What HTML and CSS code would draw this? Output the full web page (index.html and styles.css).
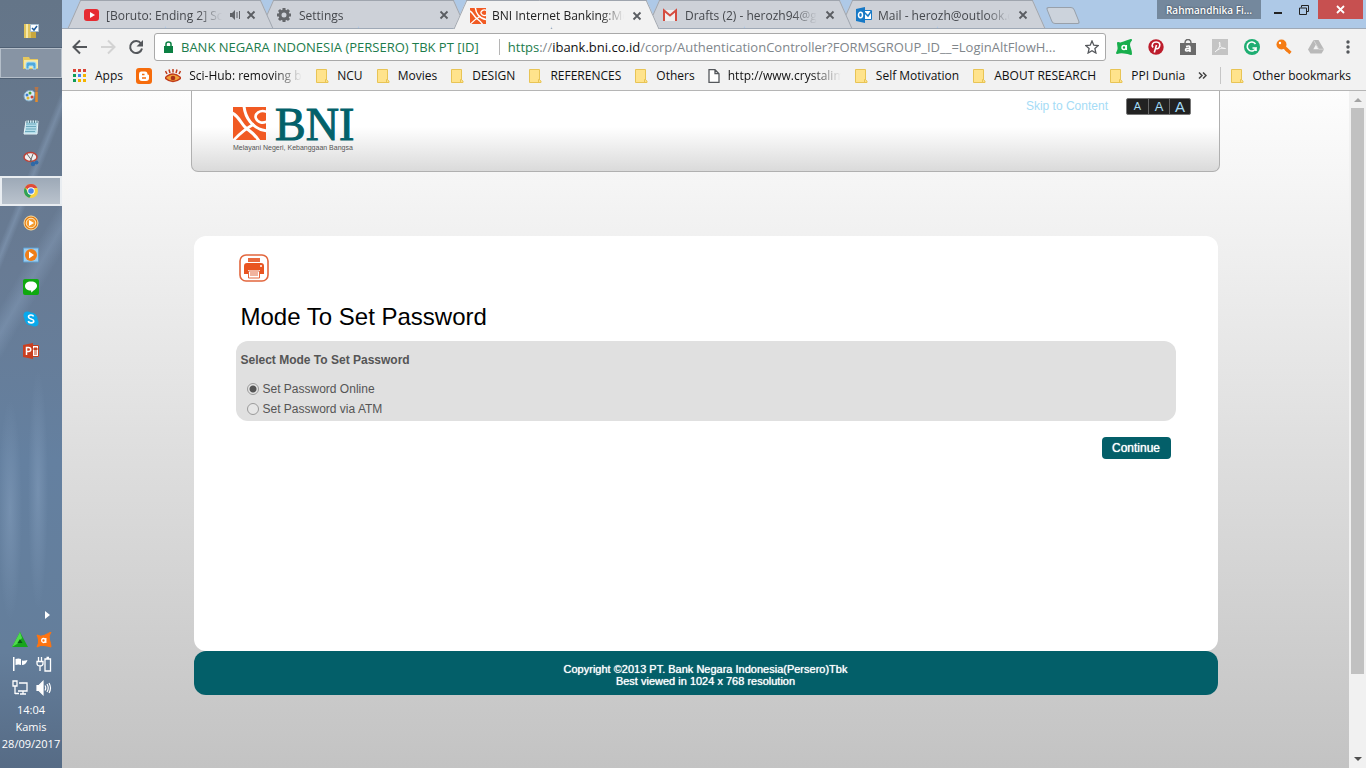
FILE: index.html
```html
<!DOCTYPE html>
<html lang="en">
<head>
    <meta charset="UTF-8">
    <meta name="viewport" content="width=device-width, initial-scale=1.0">
    <title>BNI Internet Banking:Mode To Set Password</title>
    <link rel="stylesheet" href="styles.css">
</head>
<body>

<svg class="defs" width="0" height="0" aria-hidden="true">
    <symbol id="folder" viewBox="0 0 14 16">
        <path d="M1.5 1.5h10v10.500l1.500 1v1.500h-11.500z" fill="#ffe38c" stroke="#e8c455"/>
        <path d="M10.500 14v-2.500h1.500" fill="none" stroke="#e8c455"/>
    </symbol>
    <symbol id="close" viewBox="0 0 10 10">
        <path d="M1.500 1.500l7 7M8.500 1.500l-7 7" stroke="#5a5d62" stroke-width="1.800"/>
    </symbol>
    <symbol id="bni" viewBox="0 0 33 33">
        <path d="M0 0h33v33H0z" fill="#f15a23"/>
        <g fill="none" stroke="#fff">
            <path d="M-1 6C6 9 8 17 13 21s9 6 13 13" stroke-width="3"/>
            <path d="M11-1C12 10 19 22 34 24" stroke-width="3"/>
            <path d="M34 5C27 2 21 7 23 11.500s7 5 11 3" stroke-width="2.600"/>
            <path d="M21 17C14 21 7 26 0 34" stroke-width="2.600"/>
        </g>
    </symbol>
</svg>

<div class="desktop">
    <nav class="taskbar" aria-label="Taskbar">
        <div class="apps">
            <button class="app" aria-label="Tasks"><svg width="16" height="16" viewBox="0 0 16 16"><path d="M1 1h7v14H1z" fill="#e2c55c"/><path d="M3 1h2v14H3z" fill="#f7e9a8"/><path d="M8 7h5v8H8z" fill="#c9a73f"/><path d="M7.500 1.500h8v7h-8z" fill="#fff" stroke="#a8bfd2"/><path d="M9 5l2 2 3-4" fill="none" stroke="#1e5b9b" stroke-width="1.500"/></svg></button>
            <button class="app open" aria-label="File Explorer"><svg width="16" height="16" viewBox="0 0 16 16"><path d="M0 2h6l1 2h8v10H0z" fill="#e5c75d"/><path d="M1 5h14v8H1z" fill="#f8e9a4"/><path d="M3 14V9q0-2 2-2h6q2 0 2 2v5h-3v-3H6v3z" fill="#4fa9dd" stroke="#aee0f7"/></svg></button>
            <button class="app" aria-label="Paint"><svg width="16" height="16" viewBox="0 0 16 16"><path d="M1 9c0-4 5-7 9-5 3 2 1 4 1 6s-2 4-5 4-5-2-5-5z" fill="#d9eaf4" stroke="#7aa6c3"/><circle cx="4" cy="8" r="1.500" fill="#3a7ed0"/><circle cx="7" cy="6" r="1.500" fill="#53a33d"/><circle cx="5" cy="11" r="1.500" fill="#e0b832"/><circle cx="9" cy="10" r="1.500" fill="#c9443a"/><path d="M13.500 5v10" stroke="#e48b2b" stroke-width="2.500"/><path d="M11.500 0h4l-1 5h-2z" fill="#b3754b"/></svg></button>
            <button class="app" aria-label="Notepad"><svg width="16" height="16" viewBox="0 0 16 16"><path d="M3 2h12l-1 13H1z" fill="#b4dce9" stroke="#e9f5f8"/><path d="M3 5h10M3 7.500h10M3 10h10M2 12.500h10" stroke="#6ba9bd"/><path d="M4 1v3M6.500 1v3M9 1v3M11.500 1v3M14 1v3" stroke="#567b8b"/></svg></button>
            <button class="app" aria-label="Snipping Tool"><svg width="16" height="16" viewBox="0 0 16 16"><ellipse cx="7.500" cy="6" rx="6.500" ry="4.500" fill="#f0eeee" stroke="#bd4237" stroke-width="1.500"/><path d="M4 3l6 8M10 3l-3 8" stroke="#666"/><circle cx="10" cy="13" r="2.200" fill="#2e69a7"/><circle cx="13.500" cy="11.500" r="2" fill="#2e69a7"/></svg></button>
            <button class="app open bright" aria-label="Google Chrome"><svg width="16" height="16" viewBox="0 0 16 16"><circle cx="8" cy="8" r="7" fill="#f8d13d"/><path d="M8 8L2 4.400A7 7 0 0 1 14.300 5H8z" fill="#df4b3b"/><path d="M2 4.400L6 11l2 .8-1.500 3A7 7 0 0 1 2 4.400z" fill="#2da058"/><circle cx="8" cy="8" r="3.700" fill="#fff"/><circle cx="8" cy="8" r="2.800" fill="#4b86e8"/></svg></button>
            <button class="app" aria-label="Media Player"><svg width="16" height="16" viewBox="0 0 16 16"><circle cx="8" cy="8" r="7" fill="#e27b12" stroke="#ffe0a0"/><circle cx="8" cy="8" r="4.800" fill="#f59a2b" stroke="#fff1cf"/><path d="M6 5l5 3-5 3z" fill="#fff"/></svg></button>
            <button class="app" aria-label="Movie Player"><svg width="16" height="16" viewBox="0 0 16 16"><path d="M.5 1h15v14H.5z" fill="#9ccdf0" stroke="#5e9dcc"/><circle cx="8" cy="8" r="6" fill="#ef7e17"/><path d="M6 4.500l5 3.500-5 3.500z" fill="#fff"/></svg></button>
            <button class="app" aria-label="Line"><svg width="16" height="16" viewBox="0 0 16 16"><rect width="16" height="16" rx="2" fill="#0fa90f"/><path d="M8 2.500c4 0 6 2 6 4.500S11 11 9 13c-.5 1-1 .5-.8-1.500C4 11.500 2 9.500 2 7s2-4.500 6-4.500z" fill="#fff"/></svg></button>
            <button class="app" aria-label="Skype"><svg width="16" height="16" viewBox="0 0 16 16"><circle cx="8" cy="8" r="6.500" fill="#08a9ec"/><circle cx="4.500" cy="4.500" r="4" fill="#08a9ec"/><circle cx="11.500" cy="11.500" r="4" fill="#08a9ec"/><path d="M10.500 5.500C10 3.500 5.500 3.500 5.500 6s5.300 1.500 5.300 4-5 2.500-5.500 0" fill="none" stroke="#fff" stroke-width="1.600"/></svg></button>
            <button class="app" aria-label="PowerPoint"><svg width="16" height="16" viewBox="0 0 16 16"><path d="M9 2.500h6.500v11H9z" fill="#fff" stroke="#c43e1d"/><path d="M11 5h3v2h-3zM11 9h3M11 11h3" fill="#c43e1d" stroke="#c43e1d"/><path d="M0 2l10-2v16L0 14z" fill="#c93f20"/><path d="M3.500 12V4.500h2c3 0 3 4 0 4h-2" fill="none" stroke="#fff" stroke-width="1.500"/></svg></button>
        </div>
        <div class="tray">
            <button class="tray-more" aria-label="Show hidden icons"><svg width="5" height="8" viewBox="0 0 5 8"><path d="M0 0l5 4-5 4z" fill="#fff"/></svg></button>
            <div class="tray-icons">
                <svg width="16" height="16" viewBox="0 0 16 16"><path d="M8 0l8 15H0z" fill="#16a51c"/><path d="M8 0l2 6-5 6-5 3z" fill="#4fdc4c"/><path d="M8 7l2.500 4h-5z" fill="#075c12"/></svg>
                <svg width="16" height="16" viewBox="0 0 16 16"><path d="M15 0Q12 4 13.500 8T15 15Q12 14 8 13.500T1 15Q3 11 2.500 8T1 3Q5 5 8 3.500T15 0z" fill="#ff7410" stroke="#ff7410" stroke-linejoin="round"/><ellipse cx="7.500" cy="8.500" rx="1.800" ry="2" fill="none" stroke="#fff" stroke-width="1.300"/><path d="M9.800 6v5" stroke="#fff" stroke-width="1.300"/></svg>
                <svg width="16" height="16" viewBox="0 0 16 16" fill="#fff"><path d="M1 1h1.500v14H1zM3.500 3q3-1 5.500 0v6q-2.500-1-5.500 0zM10 4.500q2 .5 5.500-.5-1.500 5-5.500 5z"/></svg>
                <svg width="16" height="16" viewBox="0 0 16 16" fill="none" stroke="#fff" stroke-width="1.300"><path d="M2.500 1v4M5.500 1v4M1 5.500h6v2Q7 10 4 10T1 7.500zM4 10v5"/><path d="M9 3h5.500v12H9zM10.500 1.500H13"/></svg>
                <svg width="16" height="16" viewBox="0 0 16 16" fill="none" stroke="#fff" stroke-width="1.300"><path d="M7 3h8v8H6M8 14h6M11 11v3M1 1h4v5H1zM3 6v8M3 13.500h4"/></svg>
                <svg width="16" height="16" viewBox="0 0 16 16" fill="none" stroke="#fff" stroke-width="1.200"><path d="M1 5.500h2l4-4v13l-4-4H1z" fill="#fff"/><path d="M9 5.500q1.500 2.500 0 5M11 4q2.500 4 0 8M13 3q3 5 0 10"/></svg>
            </div>
            <div class="clock">
                <div>14:04</div>
                <div>Kamis</div>
                <div>28/09/2017</div>
            </div>
        </div>
    </nav>

    <div class="browser">
        <header class="tabs">
            <div class="tab">
                <svg class="favicon" width="16" height="16" viewBox="0 0 16 16"><rect x="0" y="2" width="15" height="12" rx="3" fill="#e62b31"/><path d="M6 5l5 3-5 3z" fill="#fff"/></svg>
                <span class="tab-title">[Boruto: Ending 2] Scenario</span>
                <svg class="sound" width="11" height="10" viewBox="0 0 11 10"><path d="M0 3h2l3-3v10L2 7H0z" fill="#606368"/><path d="M7 2v6M9.500 1v8" stroke="#606368"/></svg>
                <button class="tab-close" aria-label="Close"><svg width="10" height="10"><use href="#close"/></svg></button>
            </div>
            <div class="tab">
                <svg class="favicon" width="16" height="16" viewBox="0 0 16 16"><circle cx="7" cy="8" r="4" fill="none" stroke="#64676b" stroke-width="3"/><path d="M7 1v3M7 12v3M0 8h3M11 8h3M2 3l2 2M10 11l2 2M12 3l-2 2M2 13l2-2" stroke="#64676b" stroke-width="3"/></svg>
                <span class="tab-title">Settings</span>
                <button class="tab-close" aria-label="Close"><svg width="10" height="10"><use href="#close"/></svg></button>
            </div>
            <div class="tab active">
                <svg class="favicon" width="16" height="16"><use href="#bni"/></svg>
                <span class="tab-title">BNI Internet Banking:Mode To</span>
                <button class="tab-close" aria-label="Close"><svg width="10" height="10"><use href="#close"/></svg></button>
            </div>
            <div class="tab">
                <svg class="favicon" width="16" height="16" viewBox="0 0 16 16"><path d="M1 3h12v11H1z" fill="#eee"/><path d="M1 14V3.500l6 5 6-5V14" fill="none" stroke="#d54c3f" stroke-width="2"/></svg>
                <span class="tab-title">Drafts (2) - herozh94@gmail</span>
                <button class="tab-close" aria-label="Close"><svg width="10" height="10"><use href="#close"/></svg></button>
            </div>
            <div class="tab">
                <svg class="favicon" width="16" height="16" viewBox="0 0 16 16"><path d="M8 3.500h7.500v9H8z" fill="#fff" stroke="#1779c6"/><path d="M8 5l4 4 3.500-5" fill="none" stroke="#1779c6" stroke-width="1.500"/><path d="M0 2l9-2v16l-9-2z" fill="#1779c6"/><ellipse cx="4.500" cy="8" rx="2" ry="2.700" fill="none" stroke="#fff" stroke-width="1.500"/></svg>
                <span class="tab-title">Mail - herozh@outlook.com</span>
                <button class="tab-close" aria-label="Close"><svg width="10" height="10"><use href="#close"/></svg></button>
            </div>
            <button class="new-tab" aria-label="New tab"></button>
            <div class="window-controls">
                <button class="profile">Rahmandhika Fi...</button>
                <button class="win" aria-label="Minimize"><svg width="8" height="10" viewBox="0 0 8 10"><path d="M0 8h8" stroke="#222" stroke-width="2"/></svg></button>
                <button class="win" aria-label="Restore"><svg width="10" height="10" viewBox="0 0 10 10"><path d="M.5 3h7v6.500h-7zM2.500 2.500v-2h7v6h-2" fill="none" stroke="#222"/></svg></button>
                <button class="win quit" aria-label="Close window"><svg width="9" height="9" viewBox="0 0 9 9"><path d="M1 1l7 7M8 1L1 8" stroke="#fff" stroke-width="1.800"/></svg></button>
            </div>
        </header>

        <div class="toolbar">
            <button class="nav-btn" aria-label="Back"><svg width="16" height="16" viewBox="0 0 16 16"><path d="M15 8H2M8 1.500L1.500 8 8 14.500" fill="none" stroke="#54575b" stroke-width="2"/></svg></button>
            <button class="nav-btn" aria-label="Forward"><svg width="16" height="16" viewBox="0 0 16 16"><path d="M1 8h13M8 1.500L14.500 8 8 14.500" fill="none" stroke="#d3d3d3" stroke-width="2"/></svg></button>
            <button class="nav-btn" aria-label="Reload"><svg width="16" height="16" viewBox="0 0 16 16"><path d="M13 4.500A6 6 0 1 0 14 9.500" fill="none" stroke="#54575b" stroke-width="2"/><path d="M15 1v6.500H8.500z" fill="#54575b"/></svg></button>
            <div class="omnibox">
                <button class="secure"><svg width="9" height="12" viewBox="0 0 9 12"><path d="M0 5h9v7H0z" fill="#0b8043"/><path d="M2 5V3q0-2 2.500-2T7 3v2" fill="none" stroke="#0b8043" stroke-width="1.500"/></svg>BANK NEGARA INDONESIA (PERSERO) TBK PT [ID]</button>
                <div class="url" role="textbox" aria-label="Address" contenteditable="true" spellcheck="false"><span class="scheme">https</span>://<span class="host">ibank.bni.co.id</span>/corp/AuthenticationController?FORMSGROUP_ID__=LoginAltFlowH...</div>
                <button class="star" aria-label="Bookmark this page"><svg width="14" height="14" viewBox="0 0 14 14"><path d="M7 1l1.800 4.200 4.500.4-3.400 3 1 4.400L7 10.700 3.100 13l1-4.400-3.400-3 4.500-.4z" fill="none" stroke="#54575b" stroke-width="1.300"/></svg></button>
            </div>
            <div class="extensions">
                <button aria-label="Avast"><svg width="16" height="16" viewBox="0 0 16 16"><path d="M15 1Q12 4 13.500 8T15 15Q12 14 8 13.500T1 14Q3 11 2.500 8T2 4Q5 5 8 3.500T15 1z" fill="#17ae4c" stroke="#17ae4c" stroke-width="2" stroke-linejoin="round"/><circle cx="8" cy="8.500" r="2" fill="none" stroke="#fff" stroke-width="1.500"/><path d="M10.300 6v5" stroke="#fff" stroke-width="1.500"/></svg></button>
                <button aria-label="Pinterest"><svg width="16" height="16" viewBox="0 0 16 16"><circle cx="8" cy="8" r="7.700" fill="#bd1d2c"/><path d="M5 8.500c-2-3 0-5.500 3.200-5.500 3 0 4.300 2 3.300 4.500-1 3-3.500 2.500-3.800 1.500M8.500 6L6.300 13.500" fill="none" stroke="#fff" stroke-width="1.600"/></svg></button>
                <button aria-label="Shopping"><svg width="16" height="16" viewBox="0 0 16 16"><path d="M0 4h16v12H0z" fill="#6b6b6b"/><path d="M5 4q0-3.500 3-3.500T11 4" fill="none" stroke="#6b6b6b" stroke-width="1.500"/><path d="M6 7.500q4-1.500 4 1v4.500M10 9.500q-4.500-.5-4.500 1.500T10 11" fill="none" stroke="#fff" stroke-width="1.600"/></svg></button>
                <button aria-label="PDF"><svg width="16" height="16" viewBox="0 0 16 16"><path d="M0 0h16v16H0z" fill="#c4c4c4"/><path d="M3 13C7 10 9 6 7.500 3c-1 3 2 7 6 6.500-3-1-7 0-10.500 3.500z" fill="none" stroke="#f5f5f5"/></svg></button>
                <button aria-label="Grammarly"><svg width="16" height="16" viewBox="0 0 16 16"><circle cx="8" cy="8" r="8" fill="#1eae72"/><path d="M11.500 5A4.500 4.500 0 1 0 12 9H8.500M12 9v3" fill="none" stroke="#fff" stroke-width="1.600"/></svg></button>
                <button aria-label="Password key"><svg width="16" height="16" viewBox="0 0 16 16"><circle cx="5.500" cy="5.500" r="5" fill="#f57c14"/><path d="M7 7l7.500 7" stroke="#f57c14" stroke-width="3.200"/><path d="M10 12l2-2" stroke="#f57c14" stroke-width="3"/><circle cx="4" cy="4" r="1.200" fill="#fff"/></svg></button>
                <button aria-label="Drive"><svg width="16" height="16" viewBox="0 0 16 16"><path d="M5.500 1h5l5.500 9.500-2.500 4h-11L0 10.500z" fill="#b9b9b9"/><path d="M8 5.500l2.700 4.700H5.300z" fill="#f2f2f2"/><path d="M5.500 1l5.300 9.200H16" fill="none" stroke="#d5d5d5"/></svg></button>
                <button class="dots" aria-label="Menu"><svg width="4" height="14" viewBox="0 0 4 14" fill="#54575b"><circle cx="2" cy="2" r="1.700"/><circle cx="2" cy="7" r="1.700"/><circle cx="2" cy="12" r="1.700"/></svg></button>
            </div>
        </div>

        <nav class="bookmarks" aria-label="Bookmarks">
            <a href="#"><svg class="grid-icon" width="14" height="14" viewBox="0 0 14 14"><path d="M0 0h3v3H0zM5 0h3v3H5zM10 0h3v3h-3z" fill="#db4437"/><path d="M0 5h3v3H0zM0 10h3v3H0z" fill="#0f9d58"/><path d="M5 5h3v3H5z" fill="#4285f4"/><path d="M10 5h3v3h-3zM5 10h3v3H5zM10 10h3v3h-3z" fill="#f4b400"/></svg>Apps</a>
            <a href="#" aria-label="Blogger"><svg width="16" height="16" viewBox="0 0 16 16"><rect width="16" height="16" rx="3" fill="#f66c0c"/><path d="M5 3.500h4q2.500 0 2.500 3 1.500 0 1.500 1V10q0 3-3 3H6q-3 0-3-3V6q0-2.500 2-2.500z" fill="#fff"/><path d="M6 6.500h2.500M6 10h4" stroke="#f66c0c" stroke-width="1.500"/></svg></a>
            <a href="#"><svg width="16" height="16" viewBox="0 0 16 16"><path d="M0 10q8-8 16 0-8 7-16 0z" fill="#f2a13a" stroke="#c03b1b" stroke-width="1.500"/><circle cx="8" cy="10" r="2.300" fill="#a8311a"/><path d="M2 6L.5 3M5 5L4 1.500M8 4.500V1M11 5l1-3.500M14 6l1.500-3" stroke="#c03b1b" stroke-width="1.500"/></svg><span class="long">Sci-Hub: removing barriers</span></a>
            <a href="#"><svg width="14" height="16"><use href="#folder"/></svg>NCU</a>
            <a href="#"><svg width="14" height="16"><use href="#folder"/></svg>Movies</a>
            <a href="#"><svg width="14" height="16"><use href="#folder"/></svg>DESIGN</a>
            <a href="#"><svg width="14" height="16"><use href="#folder"/></svg>REFERENCES</a>
            <a href="#"><svg width="14" height="16"><use href="#folder"/></svg>Others</a>
            <a href="#"><svg width="12" height="14" viewBox="0 0 12 14"><path d="M1 .7h6l4 4v8.600H1zM7 .7v4h4" fill="#fff" stroke="#54575b" stroke-width="1.300"/></svg><span class="long">http://www.crystalimpact</span></a>
            <a href="#"><svg width="14" height="16"><use href="#folder"/></svg>Self Motivation</a>
            <a href="#"><svg width="14" height="16"><use href="#folder"/></svg>ABOUT RESEARCH</a>
            <a href="#"><svg width="14" height="16"><use href="#folder"/></svg>PPI Dunia</a>
            <button class="more" aria-label="More bookmarks"><svg width="9" height="7" viewBox="0 0 9 7"><path d="M1 .5l3 3-3 3M5 .5l3 3-3 3" fill="none" stroke="#444" stroke-width="1.500"/></svg></button>
            <a href="#" class="other"><svg width="14" height="16"><use href="#folder"/></svg>Other bookmarks</a>
        </nav>

        <div class="viewport">
            <div class="page">
                <div class="banner">
                    <a href="#" class="logo" aria-label="BNI">
                        <svg width="124" height="34" viewBox="0 0 124 34"><use href="#bni" width="33" height="33"/><text x="42" y="33" class="logo-text">BNI</text></svg>
                        <span class="tagline">Melayani Negeri, Kebanggaan Bangsa</span>
                    </a>
                    <div class="banner-tools">
                        <a href="#content" class="skip">Skip to Content</a>
                        <div class="font-size">
                            <button class="small">A</button>
                            <button class="medium">A</button>
                            <button class="large">A</button>
                        </div>
                    </div>
                </div>

                <main class="content" id="content">
                    <button class="print" aria-label="Print"><svg width="30" height="28" viewBox="0 0 30 28"><rect x="1" y="1" width="28" height="26" rx="6" fill="#fff" stroke="#e2663d" stroke-width="1.600"/><path d="M9 4h12v4H9z" fill="#ea6a3e"/><path d="M8 9h14q3 0 3 3v8h-4v-4H9v4H5v-8q0-3 3-3z" fill="#e95420"/><circle cx="22" cy="12" r="1" fill="#fff"/><path d="M9.500 17h11v7h-11z" fill="#fff" stroke="#e2663d"/><path d="M11 19h8M11 21h8" stroke="#e2663d"/></svg></button>
                    <h1>Mode To Set Password</h1>
                    <form>
                        <fieldset class="modes">
                            <legend>Select Mode To Set Password</legend>
                            <label><input type="radio" name="mode" checked>Set Password Online</label>
                            <label><input type="radio" name="mode">Set Password via ATM</label>
                        </fieldset>
                        <div class="actions"><button type="button" class="continue">Continue</button></div>
                    </form>
                </main>

                <footer class="footer">
                    Copyright ©2013 PT. Bank Negara Indonesia(Persero)Tbk<br>
                    Best viewed in 1024 x 768 resolution
                </footer>
            </div>
            <div class="scrollbar" aria-hidden="true">
                <svg width="8" height="4" viewBox="0 0 8 4"><path d="M0 4l4-4 4 4z" fill="#a3a3a3"/></svg>
                <div class="track"><div class="thumb"></div></div>
                <svg width="8" height="4" viewBox="0 0 8 4"><path d="M0 0h8L4 4z" fill="#505050"/></svg>
            </div>
        </div>
    </div>
</div>

</body>
</html>
```

FILE: styles.css
```css
* {
    box-sizing: border-box;
}

body {
    margin: 0;
    background: #fff;
    font-family: "Liberation Sans", Arial, sans-serif;
    font-size: 12px;
}

button {
    padding: 0;
    border: 0;
    background: none;
    font: inherit;
    color: inherit;
}

svg {
    display: block;
    flex-shrink: 0;
}

.defs {
    position: absolute;
}

.desktop {
    display: flex;
    height: 100vh;
    padding-bottom: 2px;
}

/* Taskbar */
.taskbar {
    flex: 0 0 62px;
    display: flex;
    flex-direction: column;
    justify-content: space-between;
    padding: 15px 0 16px;
    color: #fff;
    font-family: "Open Sans", "Noto Sans", sans-serif;
    background:
        radial-gradient(ellipse 12px 110px at 10px 510px, rgba(150, 175, 205, 0.35), transparent),
        radial-gradient(ellipse 10px 120px at 38px 490px, rgba(150, 175, 205, 0.35), transparent),
        linear-gradient(112deg, transparent 46%, rgba(150, 175, 205, 0.35) 50%, transparent 54%) 0 80px / 62px 200px no-repeat,
        linear-gradient(120deg, transparent 40%, rgba(150, 175, 205, 0.3) 50%, transparent 60%) 0 200px / 62px 160px no-repeat,
        linear-gradient(#647588, #687b94 35%, #6480a0 60%, #647e9b 85%, #566b85);
}

.app {
    display: flex;
    align-items: center;
    justify-content: center;
    width: 100%;
    height: 32px;
}

.app.open {
    height: 30px;
    margin: 1px 0;
    border: 1px solid #b4bec9;
    background: #8794a4;
    outline: 1px solid #4f6074;
}

.app.bright {
    border: 2px solid #e9edf1;
    outline: 0;
    background: linear-gradient(#9da9b7, #bac3cd);
}

.tray-more {
    display: block;
    margin: 0 0 13px 45px;
}

.tray-icons {
    display: grid;
    grid-template-columns: 16px 16px;
    gap: 8px;
    justify-content: center;
    padding-left: 2px;
}

.clock {
    margin-top: 5px;
    text-align: center;
    font-size: 11px;
    line-height: 17px;
}

/* Browser window */
.browser {
    flex: 1;
    min-width: 0;
    display: flex;
    flex-direction: column;
    font-family: "Open Sans", "Noto Sans", sans-serif;
    background: #f2f2f2;
}

.tabs {
    display: flex;
    height: 29px;
    padding-left: 6px;
    background: #aec9e7;
    border-bottom: 1px solid #9fa9b6;
}

.tab {
    position: relative;
    z-index: 1;
    flex: 0 1 205px;
    min-width: 0;
    display: flex;
    align-items: center;
    height: 28px;
    margin-right: -12px;
    padding: 2px 17px 0 16px;
    color: #45484d;
}

.tab::before,
.tab::after {
    content: "";
    position: absolute;
    z-index: -1;
    top: 0;
    bottom: 0;
    border: 1px solid #9fa5ae;
    border-bottom: 0;
    background: #cdd1d8;
}

.tab::before {
    left: 6px;
    right: 50%;
    border-right: 0;
    transform: skewX(-24deg);
}

.tab::after {
    left: 45%;
    right: 6px;
    border-left: 0;
    transform: skewX(24deg);
}

.tab:nth-child(1) { z-index: 5; }
.tab:nth-child(2) { z-index: 4; }
.tab:nth-child(4) { z-index: 3; }
.tab:nth-child(5) { z-index: 2; }

.tab.active {
    z-index: 6;
    height: 29px;
    color: #222;
}

.tab.active::before,
.tab.active::after {
    background: #f2f2f2;
}

.tab-title {
    flex: 1;
    min-width: 0;
    margin: 0 8px 0 6px;
    overflow: hidden;
    white-space: nowrap;
    mask-image: linear-gradient(90deg, #000 calc(100% - 24px), transparent);
}

.sound {
    margin-right: 5px;
}

.new-tab {
    flex-shrink: 0;
    width: 28px;
    height: 17px;
    margin: 7px 0 0 16px;
    border: 1px solid #98a0aa;
    border-radius: 3px;
    background: #ccd3dc;
    transform: skewX(22deg);
}

.window-controls {
    display: flex;
    flex-shrink: 0;
    margin-left: auto;
    height: 19px;
}

.profile {
    width: 104px;
    margin-right: 4px;
    background: #74889d;
    color: #fff;
    font-size: 10px;
    font-weight: 600;
    text-shadow: 0 0 2px #26323f;
}

.win {
    display: flex;
    align-items: center;
    justify-content: center;
    width: 26px;
}

.quit {
    width: 45px;
    margin: 0 3px 0 1px;
    background: #c75050;
}

.toolbar {
    display: flex;
    align-items: center;
    height: 36px;
    padding: 0 16px 0 10px;
}

.nav-btn {
    margin-right: 12px;
}

.omnibox {
    flex: 1;
    min-width: 0;
    display: flex;
    align-items: center;
    height: 28px;
    margin-left: -2px;
    padding: 0 6px 0 9px;
    border: 1px solid #a9a9a9;
    border-radius: 3px;
    background: #fff;
    font-size: 13px;
}

.secure {
    display: flex;
    align-items: center;
    gap: 8px;
    color: #1c7c4c;
    white-space: nowrap;
}

.url {
    flex: 1;
    min-width: 0;
    margin: 0 10px 0 20px;
    padding-left: 8px;
    border-left: 1px solid #b5b5b5;
    line-height: 16px;
    overflow: hidden;
    white-space: nowrap;
    text-overflow: ellipsis;
    color: #80868b;
}

.scheme {
    color: #1c7c4c;
}

.host {
    color: #111;
}

.extensions {
    display: flex;
    align-items: center;
    gap: 16px;
    margin-left: 10px;
}

.dots {
    margin-left: 6px;
}

.bookmarks {
    display: flex;
    align-items: center;
    justify-content: space-between;
    height: 26px;
    padding: 0 15px 4px 11px;
    border-bottom: 1px solid #b5b5b5;
}

.bookmarks a {
    display: flex;
    align-items: center;
    gap: 8px;
    color: #111;
    text-decoration: none;
    white-space: nowrap;
}

.long {
    width: 113px;
    overflow: hidden;
    mask-image: linear-gradient(90deg, #000 84px, transparent);
}

.bookmarks .other {
    padding-left: 9px;
    border-left: 1px solid #c6c6c6;
}

/* Bank page */
.viewport {
    flex: 1;
    min-height: 0;
    display: flex;
    font-family: "Liberation Sans", Arial, sans-serif;
    background: linear-gradient(#fdfdfd, #c3c3c3);
}

.page {
    flex: 1;
    display: flex;
    flex-direction: column;
    align-items: center;
}

.banner {
    display: flex;
    justify-content: space-between;
    width: 100%;
    max-width: 1029px;
    height: 81px;
    padding: 7px 28px 0 41px;
    border: 1px solid #b0b0b0;
    border-top: 0;
    border-radius: 0 0 7px 7px;
    background: linear-gradient(#fff 45%, #dadada);
}

.logo {
    padding-top: 9px;
    color: #555;
    text-decoration: none;
}

.logo-text {
    font-family: "Liberation Serif", "Times New Roman", serif;
    font-size: 46px;
    fill: #03616a;
    stroke: #03616a;
}

.tagline {
    display: block;
    margin-top: 3px;
    font-size: 7px;
    line-height: 8px;
}

.banner-tools {
    display: flex;
    align-items: flex-start;
    gap: 18px;
}

.skip {
    color: #a5dcf6;
    line-height: 16px;
    text-decoration: none;
}

.font-size {
    display: flex;
    height: 17px;
    border: 1px solid #777;
    border-radius: 2px;
    background: #222;
    color: #a5dcf6;
}

.font-size button {
    width: 21px;
    line-height: 15px;
}

.font-size button + button {
    border-left: 1px solid #666;
}

.small { font-size: 11px; }
.medium { font-size: 13px; }
.large { font-size: 15px; }

.content {
    width: 100%;
    max-width: 1024px;
    height: 415px;
    margin-top: 64px;
    padding: 18px 42px 0;
    border-radius: 12px;
    background: #fff;
}

.print {
    display: block;
    margin-left: 3px;
}

h1 {
    margin: 21px 0 10px 5px;
    font-size: 24px;
    font-weight: normal;
    line-height: 28px;
}

.modes {
    height: 80px;
    margin: 0;
    padding: 11px 5px 0;
    border: 0;
    border-radius: 12px;
    background: #e0e0e0;
    color: #555;
}

.modes legend {
    float: left;
    width: 100%;
    margin-bottom: 11px;
    padding: 0;
    font-weight: bold;
    line-height: 16px;
}

.modes label {
    display: flex;
    align-items: center;
    clear: both;
    height: 20px;
}

.modes input {
    appearance: none;
    width: 12px;
    height: 12px;
    margin: 0 4px 0 6px;
    border: 1px solid #9a9a9a;
    border-radius: 50%;
    background: #e6e6e6;
}

.modes input:checked {
    background: radial-gradient(circle, #555 3px, #e6e6e6 4px);
}

.actions {
    display: flex;
    justify-content: flex-end;
    padding: 16px 5px 0;
}

.continue {
    width: 69px;
    height: 22px;
    border-radius: 4px;
    background: #035f69;
    color: #fff;
    text-shadow: 0 0 1px #fff;
}

.footer {
    width: 100%;
    max-width: 1024px;
    padding: 12px 0 8px;
    border-radius: 12px;
    background: #035f69;
    color: #fff;
    font-size: 11px;
    line-height: 12px;
    text-align: center;
    text-shadow: 0 0 1px #fff;
}

.scrollbar {
    flex: 0 0 17px;
    display: flex;
    flex-direction: column;
    align-items: center;
    padding: 7px 0;
    background: #f1f1f1;
}

.track {
    flex: 1;
    width: 13px;
    margin: 6px 0;
}

.thumb {
    height: 88%;
    background: #c1c1c1;
}
```
